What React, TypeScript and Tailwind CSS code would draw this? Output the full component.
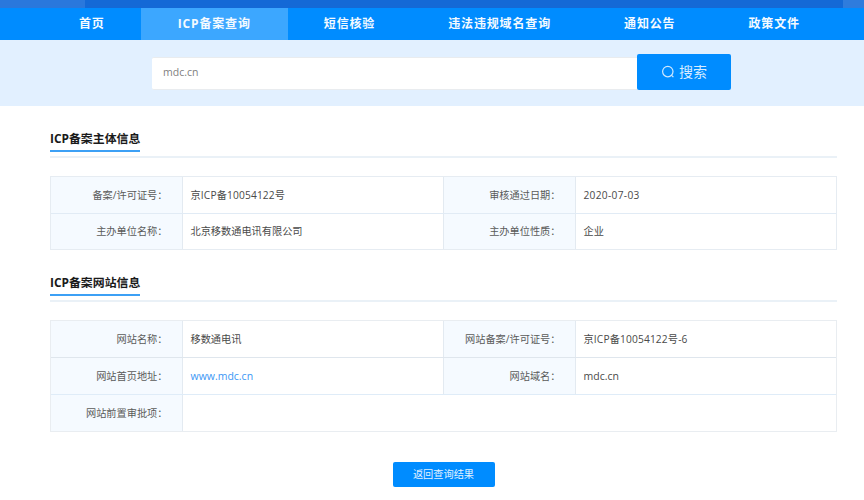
const font = { fontFamily: '"Open Sans", "Noto Sans CJK SC", sans-serif' };

function Nav({ label, active }: { label: string; active?: boolean }) {
  return (
    <div
      className={`flex h-full items-center justify-center pl-[36.5px] text-[12px] font-bold tracking-[0.85px] text-[#f4faff] ${
        active ? "mr-[-1px] bg-[#3ca7ff] pr-[37.5px]" : "pr-[36.5px]"
      }`}
    >
      {label}
    </div>
  );
}

function SectionTitle({ children }: { children: string }) {
  return (
    <div className="flex border-b-2 border-[#eaf1f7] pb-[4px]">
      <div className="border-b-2 border-[#3ca0f5] pb-[4px] text-[11.9px] leading-[16px] font-bold text-[#1a1a1a]">
        {children}
      </div>
    </div>
  );
}

function Label({ children }: { children: string }) {
  return (
    <div className="flex items-center justify-end border-r border-[#e3eaf1] bg-[#f5faff] pr-[14px] text-[10.2px] text-[#5a5a5a]">
      {children}
    </div>
  );
}

function Value({ children, border }: { children?: React.ReactNode; border?: boolean }) {
  return (
    <div
      className={`flex items-center pl-[8px] text-[10.2px] text-[#4a4a4a] ${
        border ? "border-r border-[#e3eaf1]" : ""
      }`}
    >
      {children}
    </div>
  );
}

const row4 = "grid grid-cols-[131.5px_261px_132px_1fr]";
const lowered = "[&>div]:pt-[2px]";

export default function App() {
  return (
    <div className="h-[500px] w-[864px] overflow-hidden bg-white" style={font}>
      <div className="flex h-[8px] justify-between bg-[#1469d6]">
        <div className="w-[85px] bg-[#2a78dc]" />
        <div className="w-[21px] bg-[#2f7cdd]" />
      </div>
      <div className="flex h-[32px] bg-[#008cff] pl-[42.5px]">
        <Nav label="首页" />
        <Nav label="ICP备案查询" active />
        <Nav label="短信核验" />
        <Nav label="违法违规域名查询" />
        <Nav label="通知公告" />
        <Nav label="政策文件" />
      </div>
      <div className="flex h-[66px] items-end bg-[#e2f0ff] pb-[16px] pl-[152px]">
        <div className="flex h-[33px] w-[485px] items-center rounded-l-[2px] border-y border-[#e9ecef] bg-white pb-[1px] pl-[11px] text-[10.5px] text-[#7f7f7f]">
          mdc.cn
        </div>
        <div className="flex h-[36px] w-[94px] items-center justify-center gap-[4px] rounded-[2px] bg-[#008cff] pb-[1px] text-[14px] text-[#d8ecff]">
          <svg width="14" height="14" viewBox="0 0 14 14" fill="none" stroke="#cfe8ff" strokeWidth="1.2">
            <circle cx="6.8" cy="6.6" r="5.2" />
            <path d="M10.6 10.4 12.4 12.2" />
          </svg>
          搜索
        </div>
      </div>

      <div className="pr-[27px] pl-[50px]">
        <div className="pt-[24px]">
          <SectionTitle>ICP备案主体信息</SectionTitle>
        </div>
        <div className="mt-[18px] border border-[#e6ecf2]">
          <div className={`${row4} ${lowered} h-[37px] border-b border-[#e1ebf5]`}>
            <Label>备案/许可证号：</Label>
            <Value border>
              <span className="tracking-[0.15px]">京ICP备10054122号</span>
            </Value>
            <Label>审核通过日期：</Label>
            <Value>
              <span className="tracking-[0.3px]">2020-07-03</span>
            </Value>
          </div>
          <div className={`${row4} h-[35px]`}>
            <Label>主办单位名称：</Label>
            <Value border>北京移数通电讯有限公司</Value>
            <Label>主办单位性质：</Label>
            <Value>企业</Value>
          </div>
        </div>

        <div className="mt-[24px]">
          <SectionTitle>ICP备案网站信息</SectionTitle>
        </div>
        <div className="mt-[18px] border border-[#e9edf1]">
          <div className={`${row4} ${lowered} h-[37px] border-b border-[#dfe6ed]`}>
            <Label>网站名称：</Label>
            <Value border>移数通电讯</Value>
            <Label>网站备案/许可证号：</Label>
            <Value>
              <span className="tracking-[0.15px]">京ICP备10054122号-6</span>
            </Value>
          </div>
          <div className={`${row4} ${lowered} h-[37px] border-b border-[#dfecf8]`}>
            <Label>网站首页地址：</Label>
            <Value border>
              <span className="text-[10.5px] text-[#3b97f5]">www.mdc.cn</span>
            </Value>
            <Label>网站域名：</Label>
            <Value>
              <span className="text-[10.5px]">mdc.cn</span>
            </Value>
          </div>
          <div className={`grid h-[36px] grid-cols-[131.5px_1fr] ${lowered}`}>
            <Label>网站前置审批项：</Label>
            <Value />
          </div>
        </div>

        <div className="mt-[30px] flex justify-center">
          <div className="flex h-[25px] w-[102px] items-center justify-center rounded-[2px] bg-[#008cff] text-[10.2px] text-[#e3f2ff]">
            返回查询结果
          </div>
        </div>
      </div>
    </div>
  );
}
